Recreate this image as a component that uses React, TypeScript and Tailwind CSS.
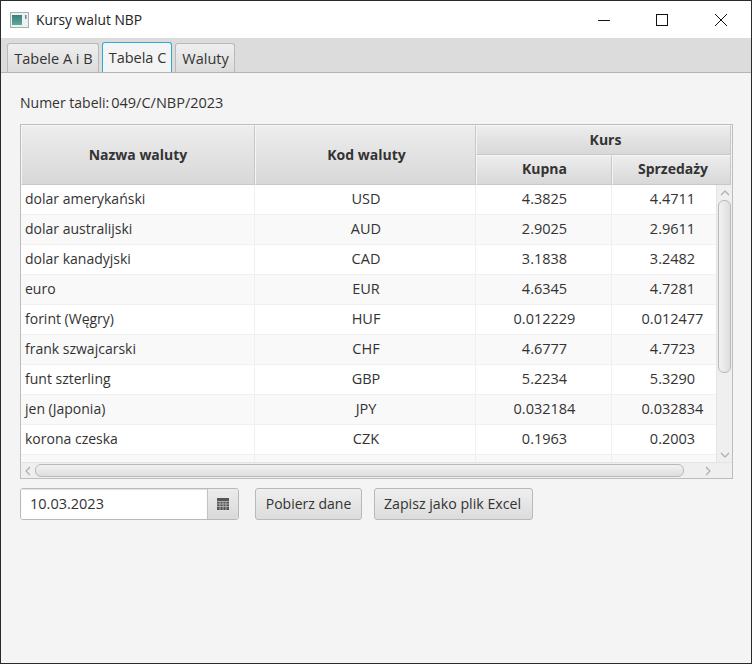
import React from 'react';

interface Row {
  name: string;
  code: string;
  buy: string;
  sell: string;
}

const rows: Row[] = [
  { name: 'dolar amerykański', code: 'USD', buy: '4.3825', sell: '4.4711' },
  { name: 'dolar australijski', code: 'AUD', buy: '2.9025', sell: '2.9611' },
  { name: 'dolar kanadyjski', code: 'CAD', buy: '3.1838', sell: '3.2482' },
  { name: 'euro', code: 'EUR', buy: '4.6345', sell: '4.7281' },
  { name: 'forint (Węgry)', code: 'HUF', buy: '0.012229', sell: '0.012477' },
  { name: 'frank szwajcarski', code: 'CHF', buy: '4.6777', sell: '4.7723' },
  { name: 'funt szterling', code: 'GBP', buy: '5.2234', sell: '5.3290' },
  { name: 'jen (Japonia)', code: 'JPY', buy: '0.032184', sell: '0.032834' },
  { name: 'korona czeska', code: 'CZK', buy: '0.1963', sell: '0.2003' },
  { name: '', code: '', buy: '', sell: '' },
];

const headerCell =
  'flex items-center justify-center text-[14px] font-bold text-[#333] bg-gradient-to-b from-[#ededed] to-[#d8d8d8] border-r border-b border-[#c8c8c8] border-t border-t-[#f7f7f7] border-l border-l-[#f4f4f4]';

function Chevron({ d }: { d: string }) {
  return (
    <svg width="10" height="10" viewBox="0 0 10 10" fill="none" stroke="#a9a9a9" strokeWidth="1.1">
      <path d={d} />
    </svg>
  );
}

function Tab({ label, active, width }: { label: string; active?: boolean; width: string }) {
  return (
    <div
      className={`${width} flex items-center justify-center pt-px pl-px rounded-t-[3px] border border-b-0 ${
        active
          ? 'h-[30px] border-[#2fa9d6] border-b-0 bg-[#f4f4f4]'
          : 'h-[29px] border-[#b9b9b9] bg-gradient-to-b from-[#efefef] to-[#dcdcdc]'
      }`}
    >
      {label}
    </div>
  );
}

export default function App() {
  return (
    <div className="w-[752px] h-[664px] flex flex-col bg-[#f4f4f4] border border-[#2b2b2b] text-[14.5px] leading-5 text-[#333] font-['Open_Sans','Noto_Sans',sans-serif] overflow-hidden">
      {/* Title bar */}
      <div className="h-[37px] shrink-0 bg-white flex items-center pl-[9px] text-[13.8px] text-[#222]">
        <svg width="19" height="16" viewBox="0 0 19 16" className="mr-[7px]">
          <rect x="0.5" y="0.5" width="18" height="15" fill="#eef1f1" stroke="#a8b0b2" />
          <defs>
            <linearGradient id="ico" x1="0" y1="0" x2="0" y2="1">
              <stop offset="0" stopColor="#3f7c80" />
              <stop offset="1" stopColor="#57ad98" />
            </linearGradient>
          </defs>
          <rect x="2" y="3" width="10" height="10" fill="url(#ico)" />
          <rect x="15" y="3" width="1.5" height="4" fill="#6a898c" />
        </svg>
        <span>Kursy walut NBP</span>
        <div className="ml-auto mr-px flex items-center">
          <div className="w-[57px] flex justify-center">
            <svg width="12" height="12" viewBox="0 0 12 12">
              <path d="M0 6.5H12" stroke="#111" strokeWidth="1" />
            </svg>
          </div>
          <div className="w-[59px] flex justify-center">
            <svg width="12" height="12" viewBox="0 0 12 12" fill="none">
              <rect x="0.5" y="0.5" width="11" height="11" stroke="#111" />
            </svg>
          </div>
          <div className="w-[59px] flex justify-center">
            <svg width="12" height="12" viewBox="0 0 12 12" fill="none">
              <path d="M0 0L12 12M12 0L0 12" stroke="#111" strokeWidth="1" />
            </svg>
          </div>
        </div>
      </div>

      {/* Tabs */}
      <div className="h-[35px] shrink-0 bg-[#dcdcdc] border-b border-[#b5b5b5] flex items-end gap-[3px] pl-[6px]">
        <Tab label="Tabele A i B" width="w-[92px]" />
        <Tab label="Tabela C" width="w-[70px]" active />
        <Tab label="Waluty" width="w-[60px]" />
      </div>

      {/* Content */}
      <div className="flex-1 flex flex-col pl-[19px] pr-[18px]">
        <div className="h-[51px] flex items-center gap-[2px] pt-[8px]">
          <span className="text-[14px]">Numer tabeli:</span>
          <span>049/C/NBP/2023</span>
        </div>

        {/* Table */}
        <div className="h-[355px] border border-[#bdbdbd] bg-white flex flex-col">
          {/* Header */}
          <div className="h-[60px] shrink-0 flex bg-[#f4f4f4]">
            <div className={`${headerCell} w-[234px]`}>Nazwa waluty</div>
            <div className={`${headerCell} w-[221px] pl-[2px]`}>Kod waluty</div>
            <div className="w-[255px] flex flex-col">
              <div className={`${headerCell} h-[30px] pb-px pl-[4px]`}>Kurs</div>
              <div className="flex h-[30px]">
                <div className={`${headerCell} w-[136px] pb-[2px] pl-px`}>Kupna</div>
                <div className={`${headerCell} w-[119px] pb-[2px] pl-[3px]`}>Sprzedaży</div>
              </div>
            </div>
          </div>

          {/* Body */}
          <div className="h-[277px] shrink-0 flex">
            <div className="w-[695px] overflow-hidden">
              {rows.map((row, i) => (
                <div key={i} className={`w-[710px] h-[30px] flex border-b border-[#f0f0f0] ${i % 2 ? 'bg-[#f9f9f9]' : 'bg-white'}`}>
                  <div className="w-[234px] pl-[4px] pb-[2px] text-[14px] border-r border-[#f0f0f0] flex items-center">{row.name}</div>
                  <div className="w-[221px] pl-[2px] pb-[2px] border-r border-[#f0f0f0] flex items-center justify-center">{row.code}</div>
                  <div className="w-[136px] pl-[2px] pb-[2px] border-r border-[#f0f0f0] flex items-center justify-center">{row.buy}</div>
                  <div className="w-[119px] pl-[2px] pb-[2px] flex items-center justify-center">{row.sell}</div>
                </div>
              ))}
            </div>
            {/* Vertical scrollbar */}
            <div className="flex-1 bg-[#efefef] border-l border-[#e4e4e4] flex flex-col items-center">
              <div className="h-[15px] flex items-center justify-center">
                <Chevron d="M1 7L5 3L9 7" />
              </div>
              <div className="w-[13px] h-[173px] rounded-[6px] border border-[#b9b9b9] bg-gradient-to-r from-[#f2f2f2] to-[#dedede]" />
              <div className="mt-auto h-[15px] flex items-center justify-center">
                <Chevron d="M1 3L5 7L9 3" />
              </div>
            </div>
          </div>

          {/* Horizontal scrollbar */}
          <div className="flex-1 bg-[#efefef] flex items-center border-t border-[#e4e4e4]">
            <div className="w-[14px] flex justify-center">
              <Chevron d="M7 1L3 5L7 9" />
            </div>
            <div className="w-[650px] h-[13px] rounded-[6px] border border-[#b9b9b9] bg-gradient-to-b from-[#f2f2f2] to-[#dedede]" />
            <div className="w-[48px] flex justify-center">
              <Chevron d="M3 1L7 5L3 9" />
            </div>
          </div>
        </div>

        {/* Controls */}
        <div className="flex items-center mt-[9px]">
          <div className="w-[219px] h-[32px] flex rounded-[3px] border border-[#b9b9b9] overflow-hidden">
            <div className="flex-1 bg-white flex items-center pl-[9px] shadow-[inset_0_1px_1px_#e2e2e2]">10.03.2023</div>
            <div className="w-[31px] border-l border-[#c4c4c4] bg-gradient-to-b from-[#ececec] to-[#d9d9d9] flex items-center justify-center">
              <svg width="12" height="12" viewBox="0 0 12 12">
                <rect x="0" y="0" width="12" height="12" fill="#555" />
                <path d="M0 3.5H12M0 6H12M0 8.5H12M3 3V12M6 3V12M9 3V12" stroke="#c9c9c9" strokeWidth="0.7" />
              </svg>
            </div>
          </div>
          <button className="ml-[16px] w-[107px] h-[32px] text-[14px] rounded-[3px] border border-[#b9b9b9] bg-gradient-to-b from-[#efefef] to-[#dcdcdc]">
            Pobierz dane
          </button>
          <button className="ml-[12px] w-[159px] h-[32px] pr-[2px] text-[14.2px] rounded-[3px] border border-[#b9b9b9] bg-gradient-to-b from-[#efefef] to-[#dcdcdc]">
            Zapisz jako plik Excel
          </button>
        </div>
      </div>
    </div>
  );
}
